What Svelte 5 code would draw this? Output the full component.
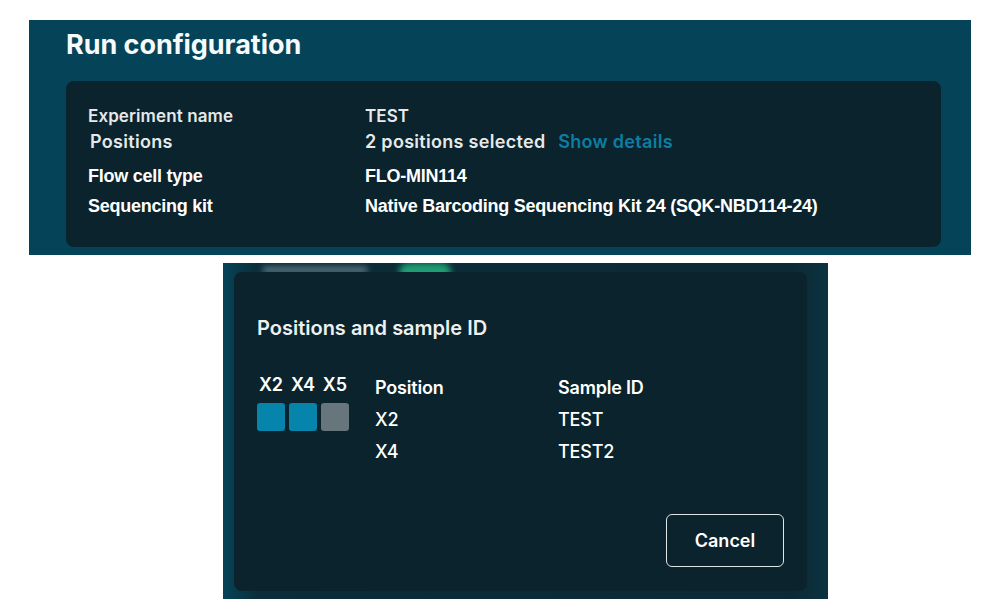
<script>
	const rows = [
		{ label: 'Flow cell type', value: 'FLO-MIN114' },
		{ label: 'Sequencing kit', value: 'Native Barcoding Sequencing Kit 24 (SQK-NBD114-24)' }
	];
	const samples = [
		{ position: 'X2', id: 'TEST' },
		{ position: 'X4', id: 'TEST2' }
	];
	const wells = [
		{ name: 'X2', on: true },
		{ name: 'X4', on: true },
		{ name: 'X5', on: false }
	];
</script>

<div class="page">
	<section class="config">
		<h1>Run configuration</h1>
		<div class="card">
			<div class="row small first">
				<span class="label">Experiment name</span>
				<span>TEST</span>
			</div>
			<div class="row small second">
				<span class="label indent">Positions</span>
				<span>2 positions selected <a href="#details">Show details</a></span>
			</div>
			{#each rows as row}
				<div class="row plain">
					<span class="label">{row.label}</span>
					<span>{row.value}</span>
				</div>
			{/each}
		</div>
	</section>

	<section class="backdrop">
		<!-- blurred page peeking out above the dialog -->
		<span class="ghost-text"></span>
		<span class="ghost-pill"></span>
		<div class="dialog">
			<h2>Positions and sample ID</h2>
			<div class="content">
				<div class="wells">
					{#each wells as well}
						<div class="well">
							<span>{well.name}</span>
							<i class:on={well.on}></i>
						</div>
					{/each}
				</div>
				<div class="table">
					<b>Position</b>
					<b>Sample ID</b>
					{#each samples as s}
						<span>{s.position}</span>
						<span>{s.id}</span>
					{/each}
				</div>
			</div>
			<div class="actions">
				<button>Cancel</button>
			</div>
		</div>
	</section>
</div>

<style>
	:global(body) {
		background: #fff;
	}

	.page {
		width: 1000px;
		height: 609px;
		padding-top: 20px;
		box-sizing: border-box;
		overflow: hidden;
		font-family: Inter, 'Liberation Sans', sans-serif;
		color: #fff;
	}

	.config {
		margin-left: 29px;
		width: 942px;
		height: 235px;
		box-sizing: border-box;
		padding: 9px 30px 0 37px;
		background: #054458;
	}

	h1 {
		margin: 0;
		font-size: 27px;
		line-height: 32px;
		font-weight: 700;
		letter-spacing: -0.05px;
		color: #f7fafa;
	}

	.card {
		margin-top: 20px;
		height: 166px;
		box-sizing: border-box;
		padding: 25px 22px 0;
		background: #0a232c;
		border-radius: 8px;
	}

	.row {
		display: grid;
		grid-template-columns: 277px 1fr;
	}

	.small {
		font-size: 17px;
		font-weight: 600;
		line-height: 20px;
		letter-spacing: 0.1px;
		color: #e6e9ea;
	}

	.first {
		margin-bottom: 6px;
	}

	.second {
		margin-bottom: 9px;
	}

	.second span {
		font-size: 18px;
		letter-spacing: 0.3px;
	}

	.indent {
		padding-left: 2px;
	}

	.small a {
		margin-left: 8px;
		color: #0a7fa3;
		text-decoration: none;
	}

	.plain {
		font-family: 'Liberation Sans', sans-serif;
		font-size: 18px;
		font-weight: 700;
		line-height: 30px;
		letter-spacing: -0.25px;
		color: #fff;
	}

	.backdrop {
		position: relative;
		margin: 8px 0 0 223px;
		width: 605px;
		height: 336px;
		box-sizing: border-box;
		padding: 9px 21px 8px 11px;
		background: linear-gradient(90deg, #064358 0, #0b2c38 6%, #0b2a35 94%, #0c3240 100%);
		overflow: hidden;
	}

	.ghost-text {
		position: absolute;
		left: 40px;
		top: 4px;
		width: 104px;
		height: 6px;
		background: #5f7d87;
		filter: blur(3px);
	}

	.ghost-pill {
		position: absolute;
		left: 176px;
		top: 0;
		width: 52px;
		height: 18px;
		border-radius: 9px;
		background: #1f9d73;
		filter: blur(3px);
	}

	.dialog {
		position: relative;
		height: 100%;
		box-sizing: border-box;
		padding: 44px 23px 0;
		background: #0a232c;
		border-radius: 8px;
	}

	h2 {
		margin: 0;
		font-size: 20px;
		line-height: 24px;
		font-weight: 600;
		color: #eef1f2;
	}

	.content {
		display: flex;
		margin-top: 33px;
	}

	.wells {
		display: flex;
		gap: 4px;
		width: 118px;
	}

	.well {
		width: 28px;
		font-size: 18px;
		font-weight: 600;
		line-height: 24px;
		display: flex;
		flex-direction: column;
		align-items: center;
		white-space: nowrap;
	}

	.well i {
		display: block;
		width: 28px;
		height: 28px;
		margin-top: 6px;
		border-radius: 3px;
		background: #67757c;
	}

	.well i.on {
		background: #0784ab;
	}

	.table {
		display: grid;
		grid-template-columns: 183px 1fr;
		grid-auto-rows: 32px;
		padding-top: 3px;
		font-size: 18px;
		line-height: 24px;
		font-weight: 500;
		letter-spacing: -0.2px;
	}

	.table b {
		font-weight: 600;
	}

	.actions {
		display: flex;
		justify-content: flex-end;
		margin-top: 42px;
	}

	button {
		width: 118px;
		height: 53px;
		background: transparent;
		border: 1px solid #dfe5e7;
		border-radius: 6px;
		font: 600 18px Inter, sans-serif;
		color: #fff;
	}
</style>
